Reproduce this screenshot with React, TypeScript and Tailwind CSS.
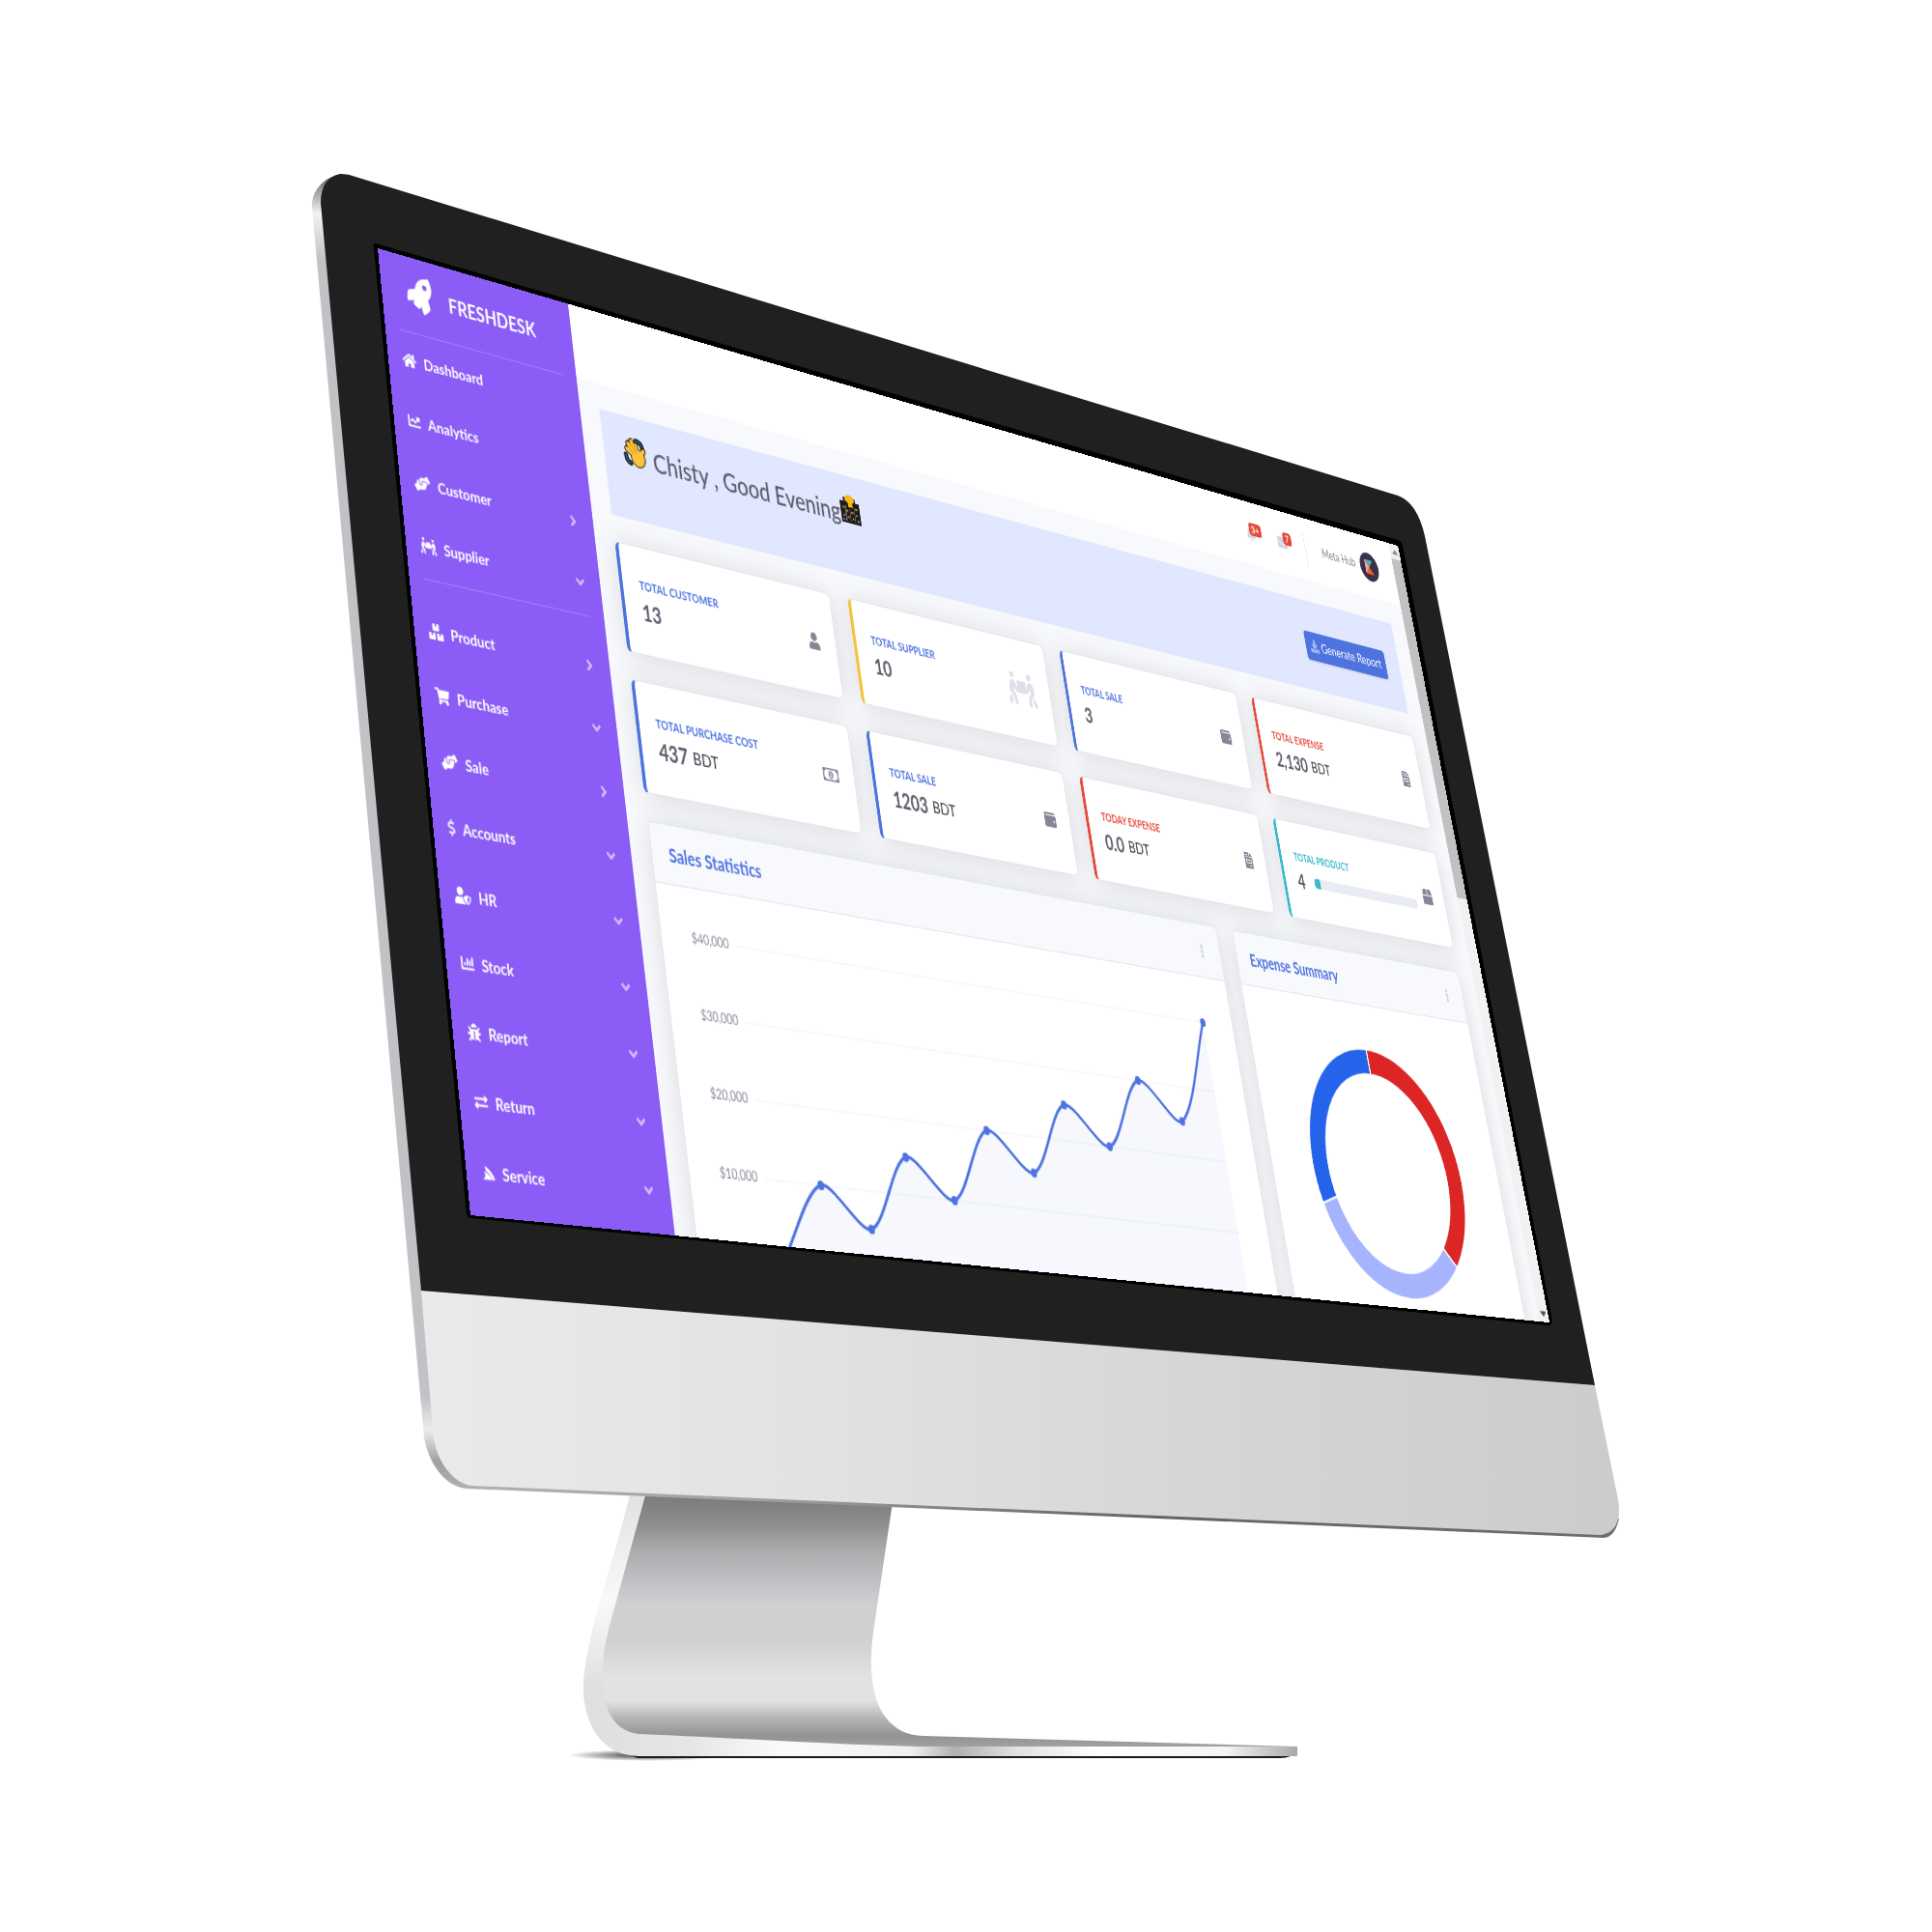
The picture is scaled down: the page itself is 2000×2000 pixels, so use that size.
import React from "react";
import type { IconType } from "react-icons";
import {
  FaRocket, FaHome, FaChartLine, FaHandsHelping, FaPeopleCarry, FaBoxes, FaShoppingCart, FaDollarSign,
  FaUserShield, FaChartBar, FaBug, FaExchangeAlt, FaServicestack, FaAngleRight, FaAngleDown, FaBell,
  FaEnvelope, FaDownload, FaUser, FaWallet, FaFileInvoice, FaRegMoneyBillAlt, FaBox, FaEllipsisV,
  FaCaretUp, FaCaretDown,
} from "react-icons/fa";

type Point = [number, number];

/* Size of the flat desktop and the four corners of the glass it is shown on. */
const SCREEN_W = 1440;
const SCREEN_H = 810;
const CORNERS: Point[] = [[391, 257], [1447, 565], [1604, 1369], [487, 1258]];

function projection(w: number, h: number, [p0, p1, p2, p3]: Point[]): string {
  const dx1 = p1[0] - p2[0], dx2 = p3[0] - p2[0], dx3 = p0[0] - p1[0] + p2[0] - p3[0];
  const dy1 = p1[1] - p2[1], dy2 = p3[1] - p2[1], dy3 = p0[1] - p1[1] + p2[1] - p3[1];
  const det = dx1 * dy2 - dx2 * dy1;
  const g = (dx3 * dy2 - dx2 * dy3) / det;
  const k = (dx1 * dy3 - dx3 * dy1) / det;
  const m = [
    (p1[0] - p0[0] + g * p1[0]) / w, (p1[1] - p0[1] + g * p1[1]) / w, 0, g / w,
    (p3[0] - p0[0] + k * p3[0]) / h, (p3[1] - p0[1] + k * p3[1]) / h, 0, k / h,
    0, 0, 1, 0,
    p0[0], p0[1], 0, 1,
  ];
  return `matrix3d(${m.join(",")})`;
}

type NavItem = { label: string; icon: IconType; size: string; arrow?: "right" | "down" };

const SQUARE = "h-3.5 w-3.5";
const WIDE = "h-3.5 w-4";
const WIDER = "h-3.5 w-[18px]";
const NARROW = "h-3.5 w-2 opacity-80";

const topNav: NavItem[] = [
  { label: "Dashboard", icon: FaHome, size: WIDE },
  { label: "Analytics", icon: FaChartLine, size: SQUARE },
  { label: "Customer", icon: FaHandsHelping, size: WIDER, arrow: "right" },
  { label: "Supplier", icon: FaPeopleCarry, size: WIDER, arrow: "down" },
];
const mainNav: NavItem[] = [
  { label: "Product", icon: FaBoxes, size: WIDE, arrow: "right" },
  { label: "Purchase", icon: FaShoppingCart, size: WIDE, arrow: "down" },
  { label: "Sale", icon: FaHandsHelping, size: WIDER, arrow: "right" },
  { label: "Accounts", icon: FaDollarSign, size: NARROW, arrow: "down" },
  { label: "HR", icon: FaUserShield, size: WIDER, arrow: "down" },
  { label: "Stock", icon: FaChartBar, size: SQUARE, arrow: "down" },
  { label: "Report", icon: FaBug, size: SQUARE, arrow: "down" },
  { label: "Return", icon: FaExchangeAlt, size: SQUARE, arrow: "down" },
  { label: "Service", icon: FaServicestack, size: SQUARE, arrow: "down" },
];

function NavList({ items }: { items: NavItem[] }) {
  return (
    <ul>
      {items.map(({ label, icon: Icon, size, arrow }) => (
        <li key={label}>
          <a href="#" className="flex h-[55px] items-center gap-2 px-4 pb-1 text-sm font-bold text-white">
            <Icon className={size} />
            <span>{label}</span>
            {arrow === "right" && <FaAngleRight className="ml-auto size-4 opacity-60" />}
            {arrow === "down" && <FaAngleDown className="ml-auto size-4 opacity-60" />}
          </a>
        </li>
      ))}
    </ul>
  );
}

function Sidebar() {
  return (
    <nav className="w-[222px] shrink-0 bg-[#8b5cf6]">
      <a href="#" className="flex h-[70px] items-center justify-center gap-4 pr-4 text-lg font-bold text-white">
        <FaRocket className="size-8 -rotate-15" />
        <span>FRESHDESK</span>
      </a>
      <hr className="mx-4 border-white/20" />
      <NavList items={topNav} />
      <hr className="mx-4 mb-[18px] border-white/20" />
      <NavList items={mainNav} />
    </nav>
  );
}

function Topbar() {
  return (
    <header className="flex h-[70px] items-center justify-end bg-white pr-7">
      <button type="button" aria-label="Alerts" className="relative mr-8 flex w-5 justify-center text-[#d1d3e2]">
        <FaBell />
        <span className="absolute -top-1 left-2 rounded-sm bg-[#e74a3b] px-1 text-[11px] leading-[14px] font-bold text-white">3+</span>
      </button>
      <button type="button" aria-label="Messages" className="relative mr-7 flex w-5 justify-center text-[#d1d3e2]">
        <FaEnvelope />
        <span className="absolute -top-1 left-3 rounded-sm bg-[#e74a3b] px-1 text-[11px] leading-[14px] font-bold text-white">7</span>
      </button>
      <div className="h-10 border-r border-[#e3e6f0]" />
      <button type="button" className="ml-7 flex items-center gap-2 text-[13px] text-[#858796]">
        Meta Hub
        <svg viewBox="0 0 32 32" className="size-8" aria-hidden="true">
          <circle cx="16" cy="16" r="16" fill="#3b3049" />
          <path d="M9 8H23L16 16Z" fill="#5fa8a8" />
          <path d="M9 8L16 16L9 24Z" fill="#f2a596" />
          <path d="M16 16L23 24H9Z" fill="#f4602a" />
        </svg>
      </button>
    </header>
  );
}

const HAND = "M15 18L5 12M15 18L7 7M16 17L11 4M18 17L16 7M19 19L25 11M16 20L19 21";

function WaveIcon() {
  return (
    <svg viewBox="0 0 28 28" className="size-7" fill="none" strokeLinecap="round" aria-hidden="true">
      <path d="M17 3Q23 3 24 8M3 18Q3 24 8 25" stroke="#111" strokeWidth="5" />
      <path d="M17 3Q23 3 24 8M3 18Q3 24 8 25" stroke="#1f6f7c" strokeWidth="2" />
      <path d={HAND} stroke="#1c1408" strokeWidth="6" />
      <circle cx="18" cy="19" r="9" fill="#1c1408" />
      <path d={HAND} stroke="#fcc43c" strokeWidth="4" />
      <circle cx="18" cy="19" r="8" fill="#fcc43c" />
      <path d="M7 10L13 16M10 7L15 14M14 6L17 13" stroke="#c98a1c" strokeWidth="1" />
    </svg>
  );
}

function CityIcon() {
  return (
    <svg viewBox="0 0 28 28" className="size-7" aria-hidden="true">
      <path d="M1 7H6V3H22V7H27V28H1Z" fill="#1b1b1b" />
      <path d="M8 6Q8 0 15 0Q21 0 21 6L18 8V12H12V8Z" fill="#f9b916" />
      <path d="M4 12H6V14H4ZM9 15H11V17H9ZM15 16H18V18H15ZM21 12H24V14H21ZM4 20H6V22H4ZM10 21H12V23H10ZM21 18H23V20H21ZM16 22H18V24H16Z" fill="#b0892a" />
      <path d="M7 11H9V26H7ZM13 14H14V26H13ZM19 11H20V26H19ZM3 24H6V26H3ZM22 23H25V26H22Z" fill="#66666c" />
    </svg>
  );
}

function Banner() {
  return (
    <section className="flex h-[98px] items-center justify-between bg-[#e0e7ff] px-6">
      <h1 className="mb-6 flex items-start gap-2 text-[25px] leading-9 font-medium text-[#5a5c69]">
        <WaveIcon />
        <span className="flex items-start">Chisty , Good Evening<CityIcon /></span>
      </h1>
      <button type="button" className="flex h-[31px] items-center gap-1 rounded-sm bg-[#4e73df] px-2 text-sm text-white shadow-sm">
        <FaDownload className="h-3.5 opacity-50" />
        Generate Report
      </button>
    </section>
  );
}

type Stat = { label: string; value: string; unit?: string; icon: IconType; tone: string; iconClass: string; progress?: number };

const BLUE = "border-l-[#4e73df] text-[#4e73df]";
const YELLOW = "border-l-[#f6c23e] text-[#4e73df]";
const RED = "border-l-[#e74a3b] text-[#e74a3b]";
const TEAL = "border-l-[#36b9cc] text-[#36b9cc]";
const ICON = "h-4 w-4 text-[#858796]";
const ICON_WIDE = "h-4 w-5 text-[#858796]";
const ICON_SLIM = "h-4 w-3 text-[#858796]";
const ICON_LARGE = "h-8 w-10 text-[#dddfeb]";

const stats: Stat[] = [
  { label: "Total Customer", value: "13", icon: FaUser, tone: BLUE, iconClass: ICON },
  { label: "Total Supplier", value: "10", icon: FaPeopleCarry, tone: YELLOW, iconClass: ICON_LARGE },
  { label: "Total Sale", value: "3", icon: FaWallet, tone: BLUE, iconClass: ICON },
  { label: "Total Expense", value: "2,130", unit: "BDT", icon: FaFileInvoice, tone: RED, iconClass: ICON_SLIM },
  { label: "Total Purchase Cost", value: "437", unit: "BDT", icon: FaRegMoneyBillAlt, tone: BLUE, iconClass: ICON_WIDE },
  { label: "Total Sale", value: "1203", unit: "BDT", icon: FaWallet, tone: BLUE, iconClass: ICON },
  { label: "Today Expense", value: "0.0", unit: "BDT", icon: FaFileInvoice, tone: RED, iconClass: ICON_SLIM },
  { label: "Total Product", value: "4", icon: FaBox, tone: TEAL, iconClass: ICON, progress: 5 },
];

const CARD = "rounded-md border border-[#e3e6f0] bg-white shadow-[0_2px_28px_rgba(58,59,69,0.15)]";

function StatCard({ label, value, unit, icon: Icon, tone, iconClass, progress }: Stat) {
  return (
    <article className={`${CARD} flex h-[100px] items-center border-l-4 px-5 ${tone}`}>
      <div className="flex-1">
        <h2 className="mb-1 text-[11px] leading-4 font-bold uppercase">{label}</h2>
        <div className="flex items-center text-xl leading-6 font-bold text-[#5a5c69]">
          <span>{value}</span>
          {unit && <span className="ml-1.5 text-base leading-6 font-normal text-[#3a3b45]">{unit}</span>}
          {progress !== undefined && (
            <div className="mr-3 ml-4 h-2.5 flex-1 overflow-hidden rounded bg-[#eaecf4]">
              <div className="h-2.5 bg-[#36b9cc]" style={{ width: `${progress}%` }} />
            </div>
          )}
        </div>
      </div>
      <Icon className={iconClass} />
    </article>
  );
}

function Panel({ title, className, children }: { title: string; className: string; children: React.ReactNode }) {
  return (
    <section className={`${CARD} ${className}`}>
      <div className="flex h-[52px] items-center justify-between rounded-t-md border-b border-[#e3e6f0] bg-[#f8f9fc] px-5">
        <h2 className="text-[17px] font-bold text-[#4e73df]">{title}</h2>
        <button type="button" aria-label={`${title} menu`} className="text-sm text-[#d1d3e2]">
          <FaEllipsisV />
        </button>
      </div>
      {children}
    </section>
  );
}

const sales = [0, 10000, 5000, 15000, 10000, 20000, 15000, 25000, 20000, 30000, 25000, 40000];
const PLOT = { left: 100, right: 715, top: 44, bottom: 304 };

function smoothLine(pts: Point[]): string {
  const tension = 0.3;
  const clamp = (y: number) => Math.min(PLOT.bottom, Math.max(PLOT.top, y));
  const ctrl = pts.map((p, i) => {
    const a = pts[i - 1] ?? p;
    const b = pts[i + 1] ?? p;
    const d0 = Math.hypot(p[0] - a[0], p[1] - a[1]);
    const d1 = Math.hypot(b[0] - p[0], b[1] - p[1]);
    const fa = (tension * d0) / (d0 + d1);
    const fb = (tension * d1) / (d0 + d1);
    return {
      before: [p[0] - fa * (b[0] - a[0]), clamp(p[1] - fa * (b[1] - a[1]))],
      after: [p[0] + fb * (b[0] - a[0]), clamp(p[1] + fb * (b[1] - a[1]))],
    };
  });
  return pts
    .map((p, i) => (i === 0 ? `M${p.join(" ")}` : `C${ctrl[i - 1].after.join(" ")} ${ctrl[i].before.join(" ")} ${p.join(" ")}`))
    .join("");
}

function SalesChart() {
  const step = (PLOT.right - PLOT.left) / (sales.length - 1);
  const yOf = (v: number) => PLOT.bottom - (v / 40000) * (PLOT.bottom - PLOT.top);
  const pts = sales.map((v, i): Point => [PLOT.left + i * step, yOf(v)]);
  const line = smoothLine(pts);
  return (
    <svg viewBox="0 0 759 340" className="w-full" role="img" aria-label="Sales by month">
      {[40000, 30000, 20000, 10000].map((v) => (
        <g key={v}>
          <line x1={PLOT.left - 11} x2={PLOT.right} y1={yOf(v)} y2={yOf(v)} stroke="#e3e5ee" strokeDasharray="2 2" />
          <text x={PLOT.left - 20} y={yOf(v) + 3} textAnchor="end" fontSize="12" fill="#858796">
            {`$${v.toLocaleString("en-US")}`}
          </text>
        </g>
      ))}
      <path d={`${line}V${PLOT.bottom}H${PLOT.left}Z`} fill="#4e73df" fillOpacity="0.05" />
      <path d={line} fill="none" stroke="#4e73df" strokeWidth="3" />
      {pts.map(([x, y]) => (
        <circle key={x} cx={x} cy={y} r="4" fill="#4e73df" />
      ))}
    </svg>
  );
}

function ringSlice(from: number, to: number, outer: number, inner: number): string {
  const at = (deg: number, r: number) => {
    const t = (deg * Math.PI) / 180;
    return `${r * Math.sin(t)} ${-r * Math.cos(t)}`;
  };
  const big = to - from > 180 ? 1 : 0;
  return `M${at(from, outer)}A${outer} ${outer} 0 ${big} 1 ${at(to, outer)}L${at(to, inner)}A${inner} ${inner} 0 ${big} 0 ${at(from, inner)}Z`;
}

const expenses = [
  { from: 0, to: 135, color: "#dc2626" },
  { from: 135, to: 252, color: "#a5b4fc" },
  { from: 252, to: 360, color: "#2563eb" },
];

function ExpenseChart() {
  return (
    <div className="flex justify-center pt-11">
      <svg viewBox="-120 -120 240 240" className="size-60" role="img" aria-label="Expense breakdown">
        {expenses.map(({ from, to, color }) => (
          <path key={color} d={ringSlice(from, to, 120, 95)} fill={color} stroke="#fff" strokeWidth="2" />
        ))}
      </svg>
    </div>
  );
}

function Scrollbar() {
  return (
    <div className="flex w-[17px] shrink-0 flex-col items-center bg-[#f1f1f1]" aria-hidden="true">
      <FaCaretUp className="h-[17px] w-2.5 text-[#8a8a8a]" />
      <div className="h-[367px] w-full bg-[#c1c1c1]" />
      <FaCaretDown className="mt-auto h-[17px] w-2.5 text-[#505050]" />
    </div>
  );
}

function Desktop() {
  return (
    <div className="flex h-[810px] w-[1440px] overflow-hidden bg-[#f8f9fc] font-['Lato',sans-serif]">
      <Sidebar />
      <div className="min-w-0 flex-1">
        <Topbar />
        <main className="grid gap-6 p-6">
          <Banner />
          <div className="grid grid-cols-4 gap-6">
            {stats.map((s, i) => (
              <StatCard key={i} {...s} />
            ))}
          </div>
          <div className="grid grid-cols-12 gap-6">
            <Panel title="Sales Statistics" className="col-span-8">
              <SalesChart />
            </Panel>
            <Panel title="Expense Summary" className="col-span-4">
              <ExpenseChart />
            </Panel>
          </div>
        </main>
      </div>
      <Scrollbar />
    </div>
  );
}

function Monitor() {
  return (
    <svg viewBox="0 0 2000 2000" className="w-full" aria-hidden="true">
      <defs>
        <linearGradient id="chin" x1="436" x2="1675" y1="0" y2="0" gradientUnits="userSpaceOnUse">
          <stop offset="0" stopColor="#e9ebea" />
          <stop offset="0.3" stopColor="#e2e3e2" />
          <stop offset="0.65" stopColor="#d5d6d6" />
          <stop offset="1" stopColor="#cccccc" />
        </linearGradient>
        <linearGradient id="side" x1="0" x2="0" y1="180" y2="1541" gradientUnits="userSpaceOnUse">
          <stop offset="0" stopColor="#444" />
          <stop offset="0.012" stopColor="#9a9a9a" />
          <stop offset="0.03" stopColor="#f2f3f3" />
          <stop offset="0.065" stopColor="#c1c2c6" />
          <stop offset="0.93" stopColor="#c1c2c6" />
          <stop offset="0.955" stopColor="#ececec" />
          <stop offset="0.98" stopColor="#a0a0a0" />
          <stop offset="1" stopColor="#b0b0b0" />
        </linearGradient>
        <linearGradient id="lip" x1="480" x2="1675" y1="0" y2="0" gradientUnits="userSpaceOnUse">
          <stop offset="0" stopColor="#b2b2b2" />
          <stop offset="0.25" stopColor="#a2a2a2" />
          <stop offset="0.6" stopColor="#636363" />
          <stop offset="1" stopColor="#6f6f6f" />
        </linearGradient>
        <linearGradient id="neck" x1="0" x2="0" y1="1550" y2="1810" gradientUnits="userSpaceOnUse">
          <stop offset="0" stopColor="#7c7c7c" />
          <stop offset="0.1" stopColor="#8b8c8c" />
          <stop offset="0.22" stopColor="#acadae" />
          <stop offset="0.36" stopColor="#c4c5c9" />
          <stop offset="0.43" stopColor="#d1d1d3" />
          <stop offset="0.57" stopColor="#d0d0d0" />
          <stop offset="0.72" stopColor="#e3e3e3" />
          <stop offset="0.81" stopColor="#e2e2e2" />
          <stop offset="0.88" stopColor="#b5b5b5" />
          <stop offset="0.95" stopColor="#929292" />
          <stop offset="1" stopColor="#a4a4a4" />
        </linearGradient>
        <linearGradient id="foot" x1="604" x2="1343" y1="0" y2="0" gradientUnits="userSpaceOnUse">
          <stop offset="0" stopColor="#dedfdf" />
          <stop offset="0.15" stopColor="#e6e6e6" />
          <stop offset="0.28" stopColor="#fbfbfb" />
          <stop offset="0.46" stopColor="#f0f0f0" />
          <stop offset="0.52" stopColor="#b0b0b0" />
          <stop offset="0.6" stopColor="#dedfe1" />
          <stop offset="0.72" stopColor="#ffffff" />
          <stop offset="0.9" stopColor="#f4f4f4" />
          <stop offset="1" stopColor="#a8a8a8" />
        </linearGradient>
        <linearGradient id="spine" x1="0" x2="0" y1="1550" y2="1815" gradientUnits="userSpaceOnUse">
          <stop offset="0" stopColor="#e2e2e2" />
          <stop offset="0.4" stopColor="#f8faf9" />
          <stop offset="0.75" stopColor="#dfdfdf" />
          <stop offset="1" stopColor="#dfdfdf" stopOpacity="0" />
        </linearGradient>
        <radialGradient id="shade">
          <stop offset="0" stopColor="#000" stopOpacity="0.8" />
          <stop offset="1" stopColor="#000" stopOpacity="0" />
        </radialGradient>
      </defs>

      {/* Stand */}
      <ellipse cx="670" cy="1817" rx="82" ry="6" fill="url(#shade)" />
      <path d="M640 1812H1343Q1338 1820 1325 1820H660Z" fill="#1a1a1a" />
      <path d="M652 1548C638 1605 624 1645 613 1690C606 1720 604 1735 604 1750C606 1795 630 1818 662 1818H1343V1808H950L668 1550Z" fill="url(#foot)" />
      <path d="M652 1548C638 1605 624 1645 613 1690C606 1720 604 1735 604 1750C606 1795 630 1818 662 1818L668 1550Z" fill="url(#spine)" />
      <path d="M668 1548L924 1555L904 1690C896 1750 910 1796 956 1797L1343 1808H950C860 1806 740 1798 662 1795C630 1792 622 1760 624 1725C625 1700 632 1680 640 1650Z" fill="url(#neck)" />

      {/* Body */}
      <path d="M353 180C334 184 322 198 323 215L439 1488C444 1516 462 1541 485 1541L500 1500L420 600Z" fill="url(#side)" />
      <path d="M470 1510L483 1541L1660 1592Q1672 1591 1676 1572Z" fill="url(#lip)" />
      <path d="M436 1336L1651 1434L1675 1552C1679 1574 1672 1588 1656 1589L488 1538C464 1534 449 1505 448 1480Z" fill="url(#chin)" />
      <path d="M353 180Q361 180 368 183L1447 513Q1467 520 1475 555L1651 1434L436 1336L332 210Q332 184 353 180Z" fill="#202020" />
      <path d="M389 252L1447 559Q1451 560 1452 565L1607 1367Q1607 1372 1602 1372L488 1261Q484 1261 483 1257L387 257Q386 251 389 252Z" fill="#000" />
    </svg>
  );
}

export default function App() {
  return (
    <div className="relative w-[2000px] overflow-hidden bg-white">
      <Monitor />
      <div className="absolute top-0 left-0 origin-top-left" style={{ transform: projection(SCREEN_W, SCREEN_H, CORNERS) }}>
        <Desktop />
      </div>
    </div>
  );
}
